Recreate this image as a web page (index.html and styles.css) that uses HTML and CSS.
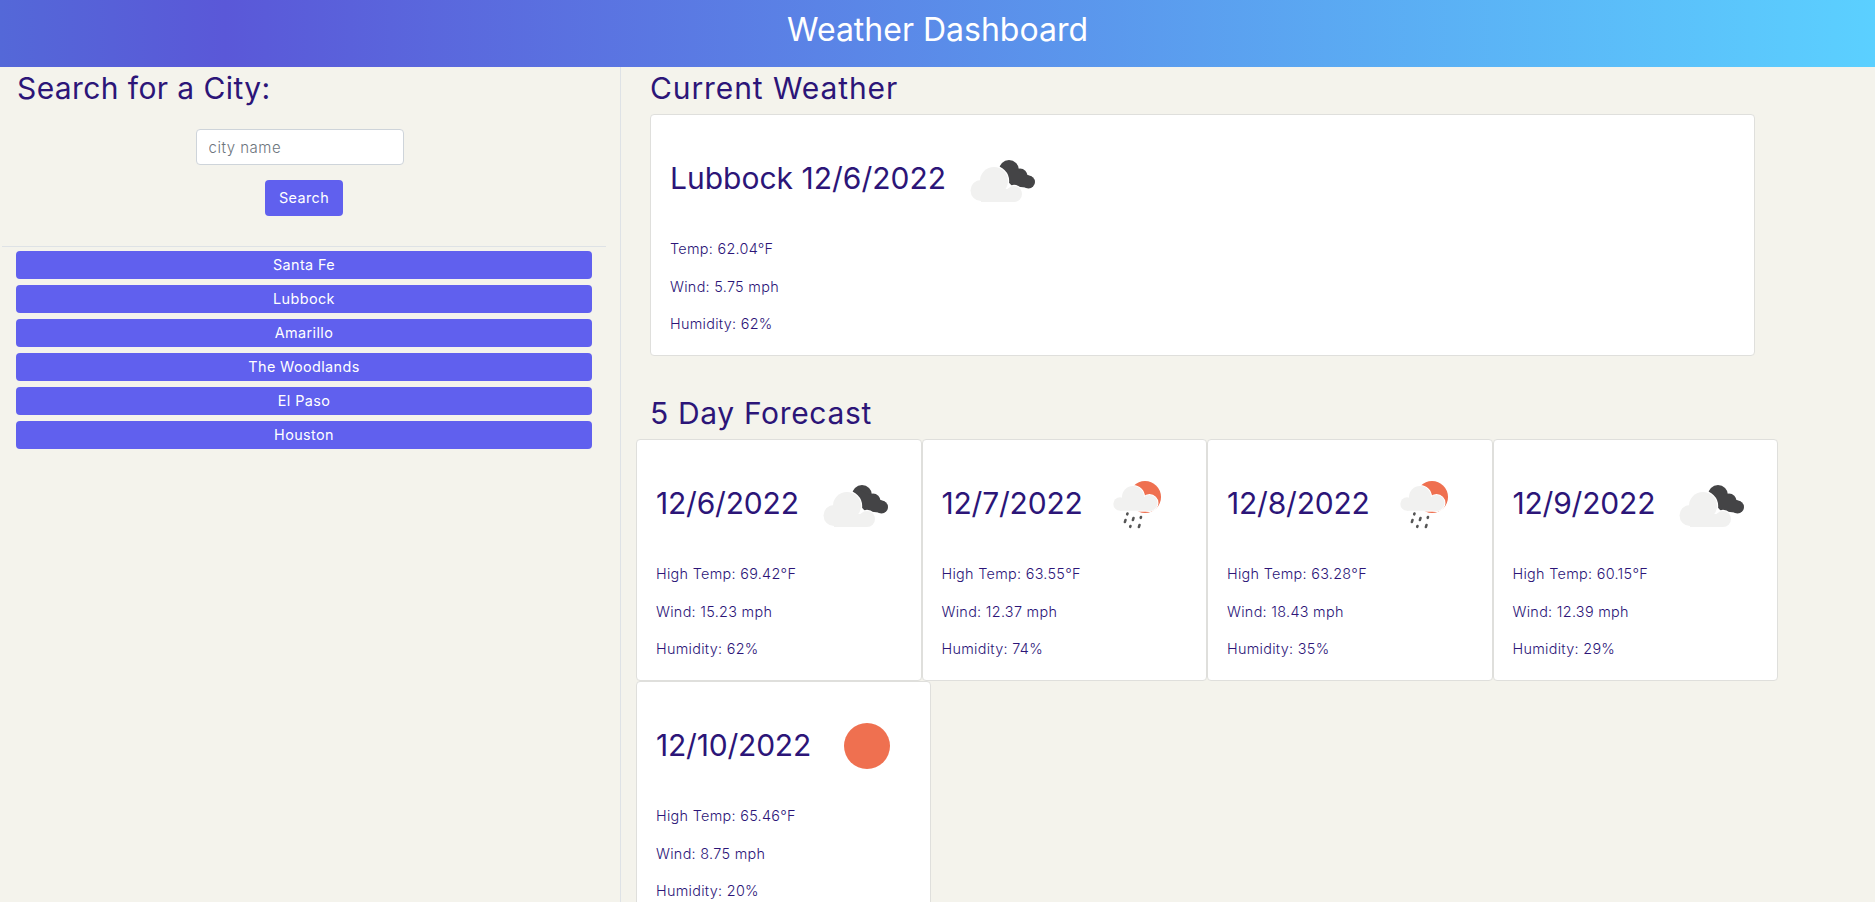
FILE: index.html
```html
<!DOCTYPE html>
<html>
<head>
  <title>Weather Dashboard</title>
  <link rel="stylesheet" href="styles.css">
</head>
<body>
  <svg class="defs" width="0" height="0">
    <symbol id="icon-clouds" viewBox="0 0 100 100">
      <g fill="#444446">
        <circle cx="57" cy="41" r="10"/>
        <circle cx="68" cy="47" r="7.5"/>
        <circle cx="76.5" cy="53" r="6.5"/>
        <path d="M50 34 L80 48 L78 59 L60 57 L52 48z"/>
      </g>
      <g fill="#fff" stroke="#fff" stroke-width="2.4">
        <circle cx="29" cy="61.5" r="10.5"/>
        <circle cx="42" cy="52" r="14"/>
        <circle cx="62" cy="65" r="8"/>
        <rect x="29" y="60" width="33" height="13"/>
      </g>
      <g fill="#f1f1f0">
        <circle cx="29" cy="61.5" r="10.5"/>
        <circle cx="42" cy="52" r="14"/>
        <circle cx="62" cy="65" r="8"/>
        <rect x="29" y="60" width="33" height="13"/>
      </g>
    </symbol>
    <symbol id="icon-rain" viewBox="0 0 100 100">
      <circle cx="56" cy="43" r="16" fill="#ef7050"/>
      <g fill="#fff" stroke="#fff" stroke-width="2">
        <circle cx="31" cy="50" r="6.7"/>
        <circle cx="44" cy="43" r="11"/>
        <circle cx="60.5" cy="49" r="8"/>
        <rect x="31" y="48" width="30" height="8.7"/>
      </g>
      <g fill="#f1f1f0">
        <circle cx="31" cy="50" r="6.7"/>
        <circle cx="44" cy="43" r="11"/>
        <circle cx="60.5" cy="49" r="8"/>
        <rect x="31" y="48" width="30" height="8.7"/>
      </g>
      <g stroke="#555" stroke-width="2.6" stroke-linecap="round">
        <path d="M38.500 59.500l-.3 .8M52 63l-.3 .8M44.500 64l-.6 2M36.500 66l-.6 2M50.500 71l-.6 2M41.500 72l-.3 .8"/>
      </g>
    </symbol>
    <symbol id="icon-sun" viewBox="0 0 100 100">
      <circle cx="50" cy="50" r="23" fill="#ef7050"/>
    </symbol>
  </svg>

  <header class="top-bar">
    <h1>Weather Dashboard</h1>
  </header>

  <div class="page">
    <aside class="sidebar">
      <h3>Search for a City:</h3>
      <form class="search">
        <input type="text" placeholder="city name">
        <button type="button" class="btn search-btn">Search</button>
      </form>
      <hr>
      <div class="history">
        <button type="button" class="btn">Santa Fe</button>
        <button type="button" class="btn">Lubbock</button>
        <button type="button" class="btn">Amarillo</button>
        <button type="button" class="btn">The Woodlands</button>
        <button type="button" class="btn">El Paso</button>
        <button type="button" class="btn">Houston</button>
      </div>
    </aside>

    <main class="content">
      <h3>Current Weather</h3>
      <div class="card current">
        <div class="card-title">
          <h2>Lubbock 12/6/2022</h2>
          <svg class="icon"><use href="#icon-clouds"/></svg>
        </div>
        <p>Temp: 62.04°F</p>
        <p>Wind: 5.75 mph</p>
        <p>Humidity: 62%</p>
      </div>

      <h3 class="forecast-head">5 Day Forecast</h3>
      <div class="forecast">
        <div class="card">
          <div class="card-title">
            <h2>12/6/2022</h2>
            <svg class="icon"><use href="#icon-clouds"/></svg>
          </div>
          <p>High Temp: 69.42°F</p>
          <p>Wind: 15.23 mph</p>
          <p>Humidity: 62%</p>
        </div>
        <div class="card">
          <div class="card-title">
            <h2>12/7/2022</h2>
            <svg class="icon"><use href="#icon-rain"/></svg>
          </div>
          <p>High Temp: 63.55°F</p>
          <p>Wind: 12.37 mph</p>
          <p>Humidity: 74%</p>
        </div>
        <div class="card">
          <div class="card-title">
            <h2>12/8/2022</h2>
            <svg class="icon"><use href="#icon-rain"/></svg>
          </div>
          <p>High Temp: 63.28°F</p>
          <p>Wind: 18.43 mph</p>
          <p>Humidity: 35%</p>
        </div>
        <div class="card">
          <div class="card-title">
            <h2>12/9/2022</h2>
            <svg class="icon"><use href="#icon-clouds"/></svg>
          </div>
          <p>High Temp: 60.15°F</p>
          <p>Wind: 12.39 mph</p>
          <p>Humidity: 29%</p>
        </div>
        <div class="card">
          <div class="card-title">
            <h2>12/10/2022</h2>
            <svg class="icon"><use href="#icon-sun"/></svg>
          </div>
          <p>High Temp: 65.46°F</p>
          <p>Wind: 8.75 mph</p>
          <p>Humidity: 20%</p>
        </div>
      </div>
    </main>
  </div>
</body>
</html>
```

FILE: styles.css
```css
* { box-sizing: border-box; }
body { margin: 0; font-family: "Inter", "Noto Sans", sans-serif; background: #f4f3ec; color: #2c1578; }
.defs { display: block; height: 0; }

.top-bar { height: 67px; display: flex; align-items: center; justify-content: center; background: linear-gradient(90deg, #5468d8 0, #5a58d8 12%, #5bd0ff 100%); }
.top-bar h1 { margin: 0 0 9px; font-size: 32px; font-weight: 400; color: white; }

.page { display: flex; }
h3 { margin: 0 0 5px; font-size: 30px; line-height: 42px; font-weight: 400; letter-spacing: .9px; }

.sidebar { width: 621px; height: 835px; flex: none; border-right: 1px solid #dee2e6; padding: 0 14px 0 2px; }
.sidebar h3 { margin: 0; padding-left: 15px; letter-spacing: .4px; }
.search { display: flex; flex-direction: column; align-items: center; padding-top: 20px; }
.search input { width: 208px; height: 36px; margin-right: 9px; padding: 6px 12px; font: 300 15px "Inter", sans-serif; letter-spacing: .5px; border: 1px solid #ced4da; border-radius: 4px; background: white; }
.search input::placeholder { color: #6c757d; }
.btn { display: block; border: 0; border-radius: 4px; background: #6060ee; color: white; font: 14.4px "Inter", sans-serif; letter-spacing: .4px; padding: 0 0 2px; }
.search-btn { width: 78px; height: 36px; margin-top: 15px; }
hr { margin: 30px 0 4px; border: 0; border-top: 1px solid #dee2e6; }
.history { display: flex; flex-direction: column; gap: 6px; padding: 0 14px; }
.history .btn { width: 576px; height: 28px; }

.content { flex: 1; padding-left: 29px; }
.card { background: white; border: 1px solid #dfdfdc; border-radius: 4px; padding: 14px 13px 0 19px; height: 242px; }
.card.current { width: 1105px; padding-top: 14px; }
.card-title { display: flex; align-items: center; gap: 6px; height: 100px; margin-bottom: 9px; }
.card-title h2 { margin: 0; padding-bottom: 3px; font-size: 30px; line-height: 42px; font-weight: 400; }
.icon { width: 100px; height: 100px; flex: none; }
.card p { margin: 0 0 16px; font-size: 14.4px; line-height: 21.6px; font-weight: 350; letter-spacing: .3px; }

.forecast-head { margin-top: 36px; margin-bottom: 5px; letter-spacing: .65px; }
.forecast { display: flex; flex-wrap: wrap; margin-left: -14px; }
.forecast .card { min-width: 285.5px; }
.forecast .card-title h2 { letter-spacing: -.2px; }
```
